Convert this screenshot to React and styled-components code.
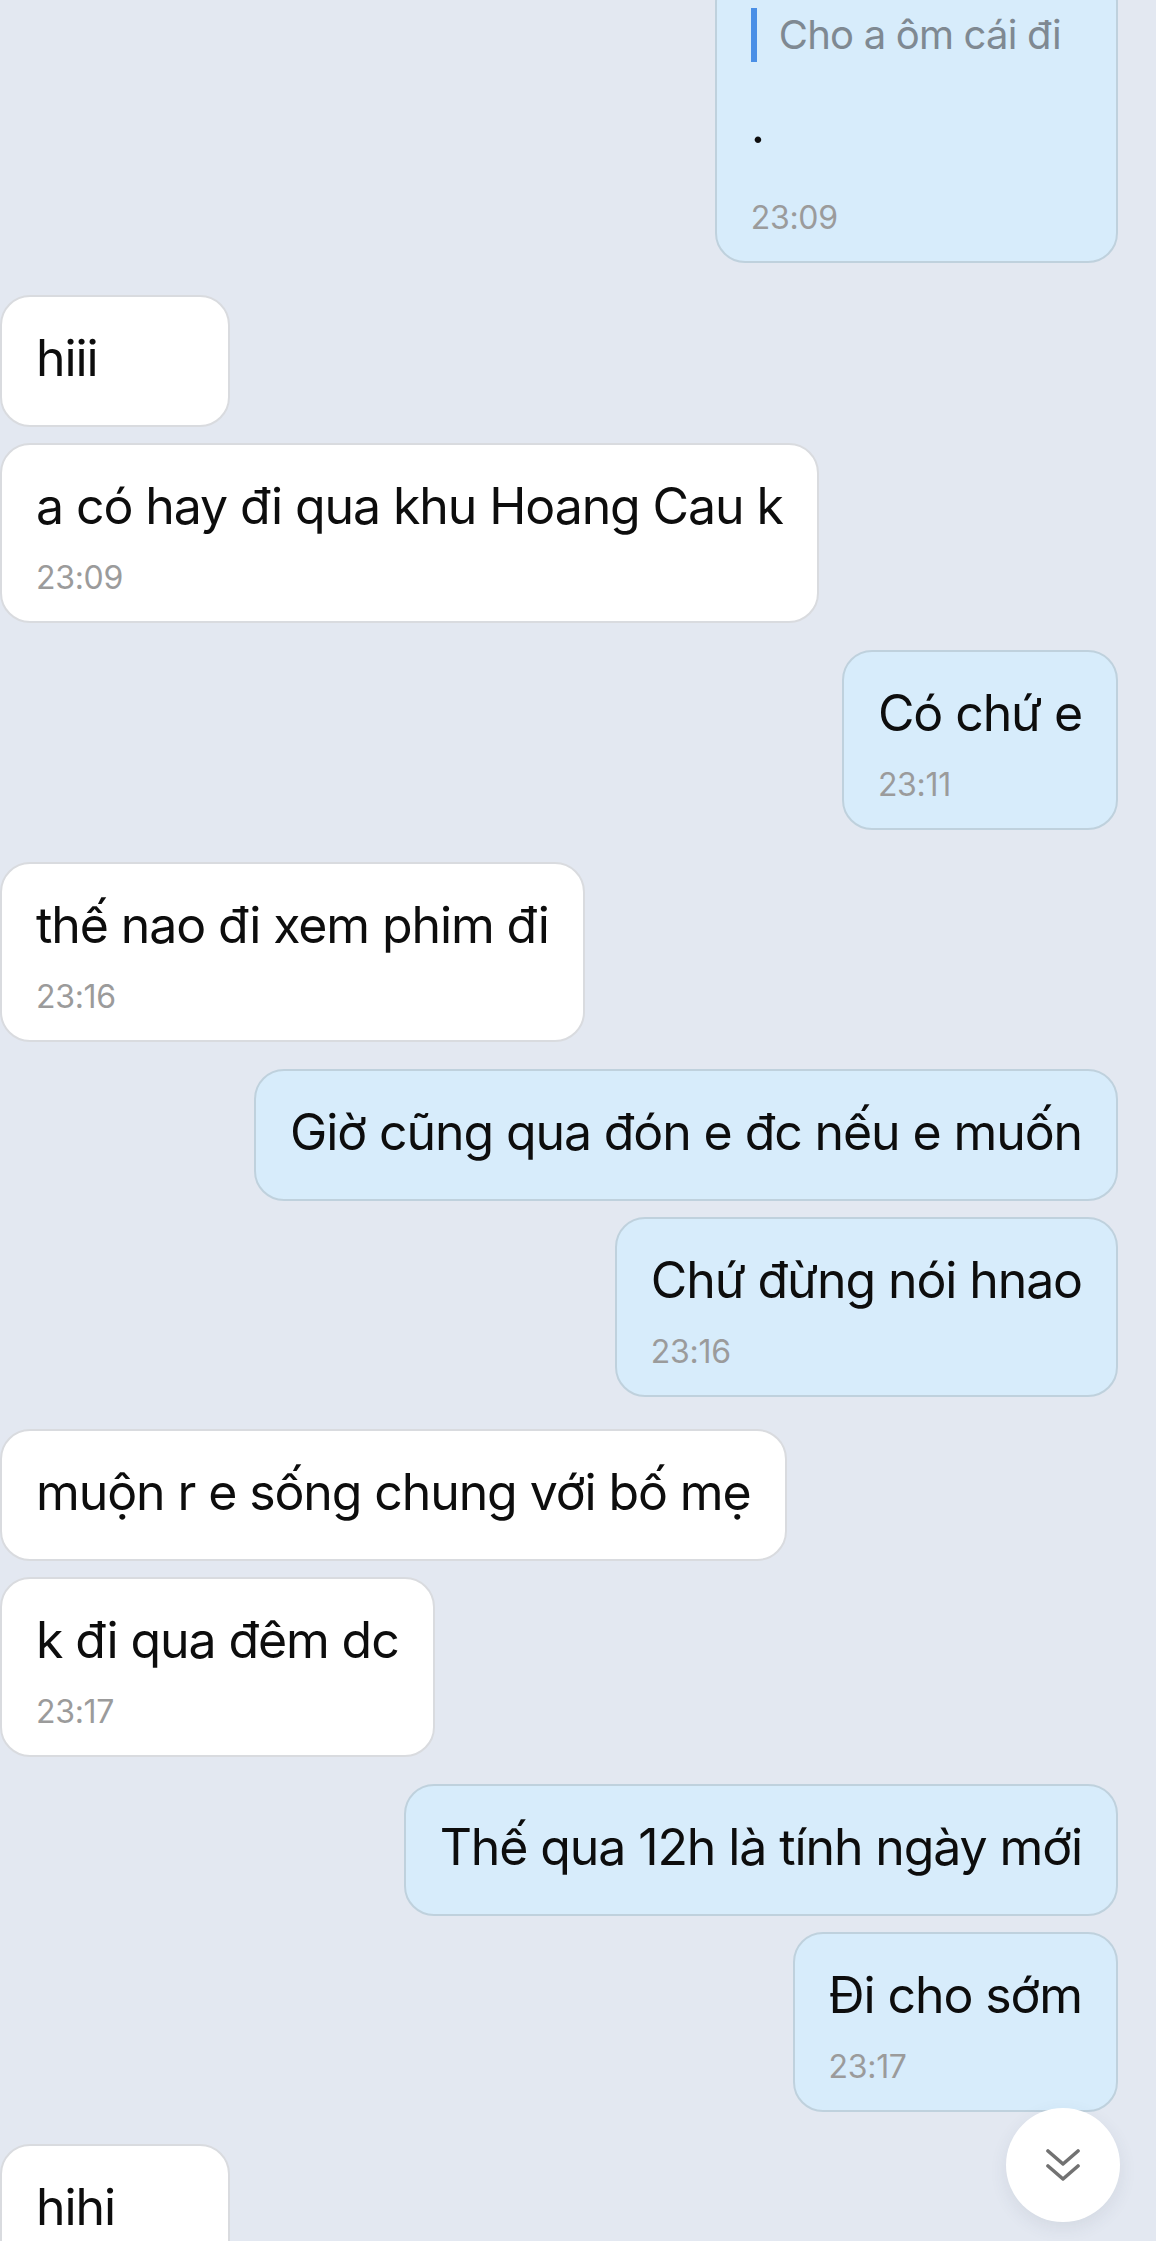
import React from "react";
import styled, { createGlobalStyle, css } from "styled-components";

const GlobalStyle = createGlobalStyle`
  * {
    box-sizing: border-box;
  }

  html,
  body {
    margin: 0;
    padding: 0;
    background: #e3e8f1;
  }

  body {
    font-family: Inter, "Noto Sans", "Liberation Sans", sans-serif;
    -webkit-font-smoothing: antialiased;
  }
`;

const Page = styled.div`
  position: relative;
  height: 2241px;
  overflow: hidden;
  background: #e3e8f1;
`;

const Feed = styled.div`
  display: flex;
  flex-direction: column;
  margin-top: -28px;
  padding-right: 38px;
`;

const Group = styled.div`
  display: flex;
  flex-direction: column;
  gap: 16px;
  align-items: ${({ $side }) => ($side === "out" ? "flex-end" : "flex-start")};
  margin-top: ${({ $side }) => ($side === "out" ? "27px" : "32px")};

  &:first-child {
    margin-top: 0;
  }
`;

const Bubble = styled.div`
  display: flex;
  flex-direction: column;
  min-width: 230px;
  padding: 34px 34px 23px;
  border: 2px solid;
  border-radius: 30px;

  ${({ $side }) =>
    $side === "out"
      ? css`
          background: #d7ecfb;
          border-color: #bfd1dd;
        `
      : css`
          background: #ffffff;
          border-color: #d9dbdf;
        `}

  ${({ $plain }) =>
    $plain &&
    css`
      padding-bottom: 34px;
    `}
`;

const Text = styled.div`
  margin: -3px 0 3px;
  font-size: 50px;
  line-height: 60px;
  color: #0d0d0d;
  white-space: nowrap;
  letter-spacing: -1.1px;
`;

const Time = styled.div`
  margin-top: ${({ $gap }) => $gap || 19}px;
  font-size: 32px;
  line-height: 40px;
  color: #9b9b9b;
  letter-spacing: -0.3px;
`;

const Quote = styled.div`
  margin-bottom: 36px;
  padding: 0 21px 0 22px;
  border-left: 6px solid #4a8fe6;
  font-size: 40px;
  line-height: 54px;
  color: #7f8992;
  white-space: nowrap;
  letter-spacing: -0.8px;
`;

const ScrollButton = styled.button`
  position: absolute;
  right: 36px;
  bottom: 19px;
  display: flex;
  align-items: center;
  justify-content: center;
  width: 114px;
  height: 114px;
  padding: 0;
  border: none;
  border-radius: 50%;
  background: #ffffff;
  box-shadow: 0 6px 18px rgba(60, 70, 90, 0.09);
  cursor: pointer;
`;

const ChevronsIcon = () => (
  <svg width="34" height="32" viewBox="0 0 34 32" fill="none">
    <polyline
      points="2,2 17,15 32,2"
      stroke="#727272"
      strokeWidth="3.6"
      strokeLinecap="round"
      strokeLinejoin="round"
    />
    <polyline
      points="2,17 17,30 32,17"
      stroke="#727272"
      strokeWidth="3.6"
      strokeLinecap="round"
      strokeLinejoin="round"
    />
  </svg>
);

const groups = [
  {
    side: "out",
    messages: [{ quote: "Cho a ôm cái đi", text: ".", time: "23:09", timeGap: 40 }],
  },
  {
    side: "in",
    messages: [{ text: "hiii" }, { text: "a có hay đi qua khu Hoang Cau k", time: "23:09" }],
  },
  {
    side: "out",
    messages: [{ text: "Có chứ e", time: "23:11" }],
  },
  {
    side: "in",
    messages: [{ text: "thế nao đi xem phim đi", time: "23:16" }],
  },
  {
    side: "out",
    messages: [{ text: "Giờ cũng qua đón e đc nếu e muốn" }, { text: "Chứ đừng nói hnao", time: "23:16" }],
  },
  {
    side: "in",
    messages: [{ text: "muộn r e sống chung với bố mẹ" }, { text: "k đi qua đêm dc", time: "23:17" }],
  },
  {
    side: "out",
    messages: [{ text: "Thế qua 12h là tính ngày mới" }, { text: "Đi cho sớm", time: "23:17" }],
  },
  {
    side: "in",
    messages: [{ text: "hihi" }],
  },
];

const App = () => (
  <>
    <GlobalStyle />
    <Page>
      <Feed>
        {groups.map((group, gi) => (
          <Group key={gi} $side={group.side}>
            {group.messages.map((msg, mi) => (
              <Bubble key={mi} $side={group.side} $plain={!msg.time}>
                {msg.quote && <Quote>{msg.quote}</Quote>}
                <Text>{msg.text}</Text>
                {msg.time && <Time $gap={msg.timeGap}>{msg.time}</Time>}
              </Bubble>
            ))}
          </Group>
        ))}
      </Feed>

      <ScrollButton aria-label="Scroll to bottom">
        <ChevronsIcon />
      </ScrollButton>
    </Page>
  </>
);

export default App;
